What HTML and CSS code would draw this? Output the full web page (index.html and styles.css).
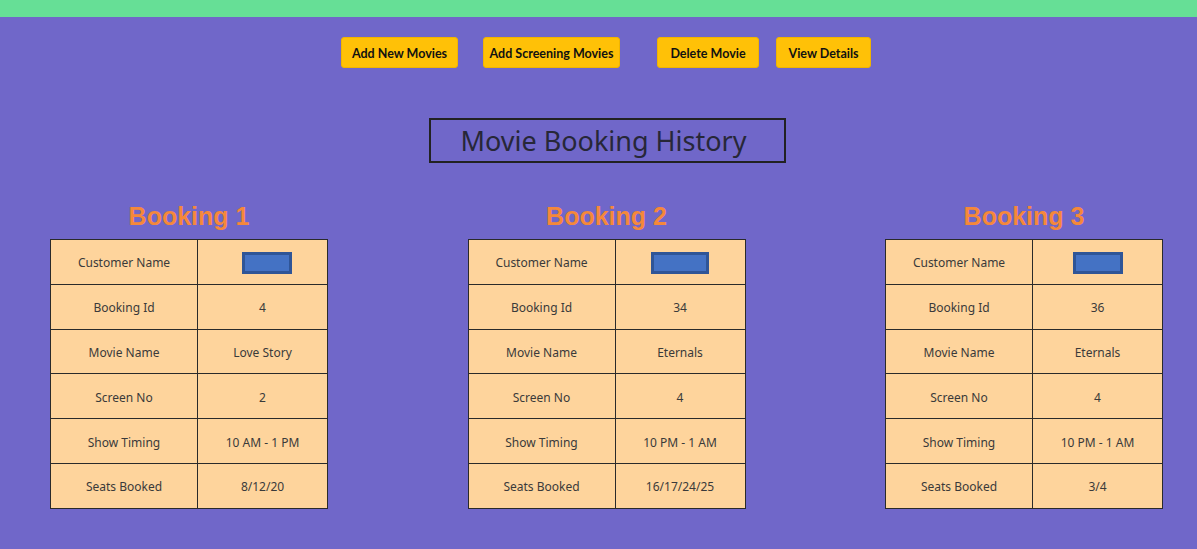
FILE: index.html
```html
<!DOCTYPE html>
<html>
<head>
<meta charset="utf-8">
<link rel="stylesheet" href="styles.css">
</head>
<body>
<div class="topbar"></div>
<nav class="nav">
  <button class="btn btn-a">Add New Movies</button>
  <button class="btn btn-b">Add Screening Movies</button>
  <button class="btn btn-c">Delete Movie</button>
  <button class="btn btn-d">View Details</button>
</nav>
<div class="title-wrap"><h1 class="title">Movie Booking History</h1></div>
<main class="bookings">
  <section class="booking">
    <h2 class="booking-title">Booking 1</h2>
    <table class="tbl">
      <tr><td class="k">Customer Name</td><td class="v"><span class="namebox namebox-shift"></span></td></tr>
      <tr><td class="k">Booking Id</td><td class="v">4</td></tr>
      <tr><td class="k">Movie Name</td><td class="v">Love Story</td></tr>
      <tr><td class="k">Screen No</td><td class="v">2</td></tr>
      <tr><td class="k">Show Timing</td><td class="v">10 AM - 1 PM</td></tr>
      <tr><td class="k">Seats Booked</td><td class="v">8/12/20</td></tr>
    </table>
  </section>
  <section class="booking">
    <h2 class="booking-title">Booking 2</h2>
    <table class="tbl">
      <tr><td class="k">Customer Name</td><td class="v"><span class="namebox namebox-wide"></span></td></tr>
      <tr><td class="k">Booking Id</td><td class="v">34</td></tr>
      <tr><td class="k">Movie Name</td><td class="v">Eternals</td></tr>
      <tr><td class="k">Screen No</td><td class="v">4</td></tr>
      <tr><td class="k">Show Timing</td><td class="v">10 PM - 1 AM</td></tr>
      <tr><td class="k">Seats Booked</td><td class="v">16/17/24/25</td></tr>
    </table>
  </section>
  <section class="booking">
    <h2 class="booking-title">Booking 3</h2>
    <table class="tbl">
      <tr><td class="k">Customer Name</td><td class="v"><span class="namebox"></span></td></tr>
      <tr><td class="k">Booking Id</td><td class="v">36</td></tr>
      <tr><td class="k">Movie Name</td><td class="v">Eternals</td></tr>
      <tr><td class="k">Screen No</td><td class="v">4</td></tr>
      <tr><td class="k">Show Timing</td><td class="v">10 PM - 1 AM</td></tr>
      <tr><td class="k">Seats Booked</td><td class="v">3/4</td></tr>
    </table>
  </section>
</main>
</body>
</html>
```
FILE: styles.css
```css
html, body {
  margin: 0;
  padding: 0;
}
body {
  background: #7067c9;
  font-family: "Noto Sans", "Open Sans", sans-serif;
  width: 1197px;
  height: 549px;
  overflow: hidden;
}
.topbar {
  height: 17px;
  background: #66df96;
}
.nav {
  display: flex;
  justify-content: flex-start;
  padding: 20px 0 0 341px;
}
.btn {
  height: 31px;
  padding: 2px 0 0;
  background: #ffc107;
  border: 1px solid #f0b400;
  border-radius: 3px;
  font-family: "Lato", "Noto Sans", sans-serif;
  font-weight: 700;
  font-size: 12.5px;
  color: #111;
  text-align: center;
  white-space: nowrap;
}
.btn-a { width: 117px; margin-right: 25px; }
.btn-b { width: 137px; margin-right: 37px; }
.btn-c { width: 102px; margin-right: 17px; }
.btn-d { width: 95px; }
.title-wrap {
  display: flex;
  justify-content: center;
  padding: 50px 0 0 17px;
}
.title {
  margin: 0;
  width: 357px;
  height: 45px;
  box-sizing: border-box;
  border: 2px solid #222;
  padding-right: 7px;
  font-weight: 400;
  font-size: 27px;
  line-height: 42px;
  text-align: center;
  color: #272738;
}
.bookings {
  display: flex;
  justify-content: space-between;
  padding: 0 34px 0 50px;
  margin-top: 39px;
}
.booking {
  width: 278px;
}
.booking-title {
  margin: 0 0 8px;
  font-family: "Liberation Sans", Arial, sans-serif;
  font-weight: 700;
  font-size: 25px;
  line-height: 29px;
  text-align: center;
  color: #f5883a;
}
.tbl {
  width: 278px;
  border-collapse: collapse;
  background: #fed49c;
  border: 1px solid #2a2a2a;
}
.tbl td {
  border: 1px solid #2a2a2a;
  height: 41.8px;
  padding: 2px 0 0;
  text-align: center;
  font-size: 12px;
  color: #3a3a3a;
}
.tbl .k { width: 146px; }
.namebox {
  display: inline-block;
  vertical-align: middle;
  width: 50px;
  height: 22px;
  box-sizing: border-box;
  background: #4472c4;
  border: 3px solid #2f5597;
}
.namebox-wide { width: 58px; }
.namebox-shift { margin-left: 9px; }
```
